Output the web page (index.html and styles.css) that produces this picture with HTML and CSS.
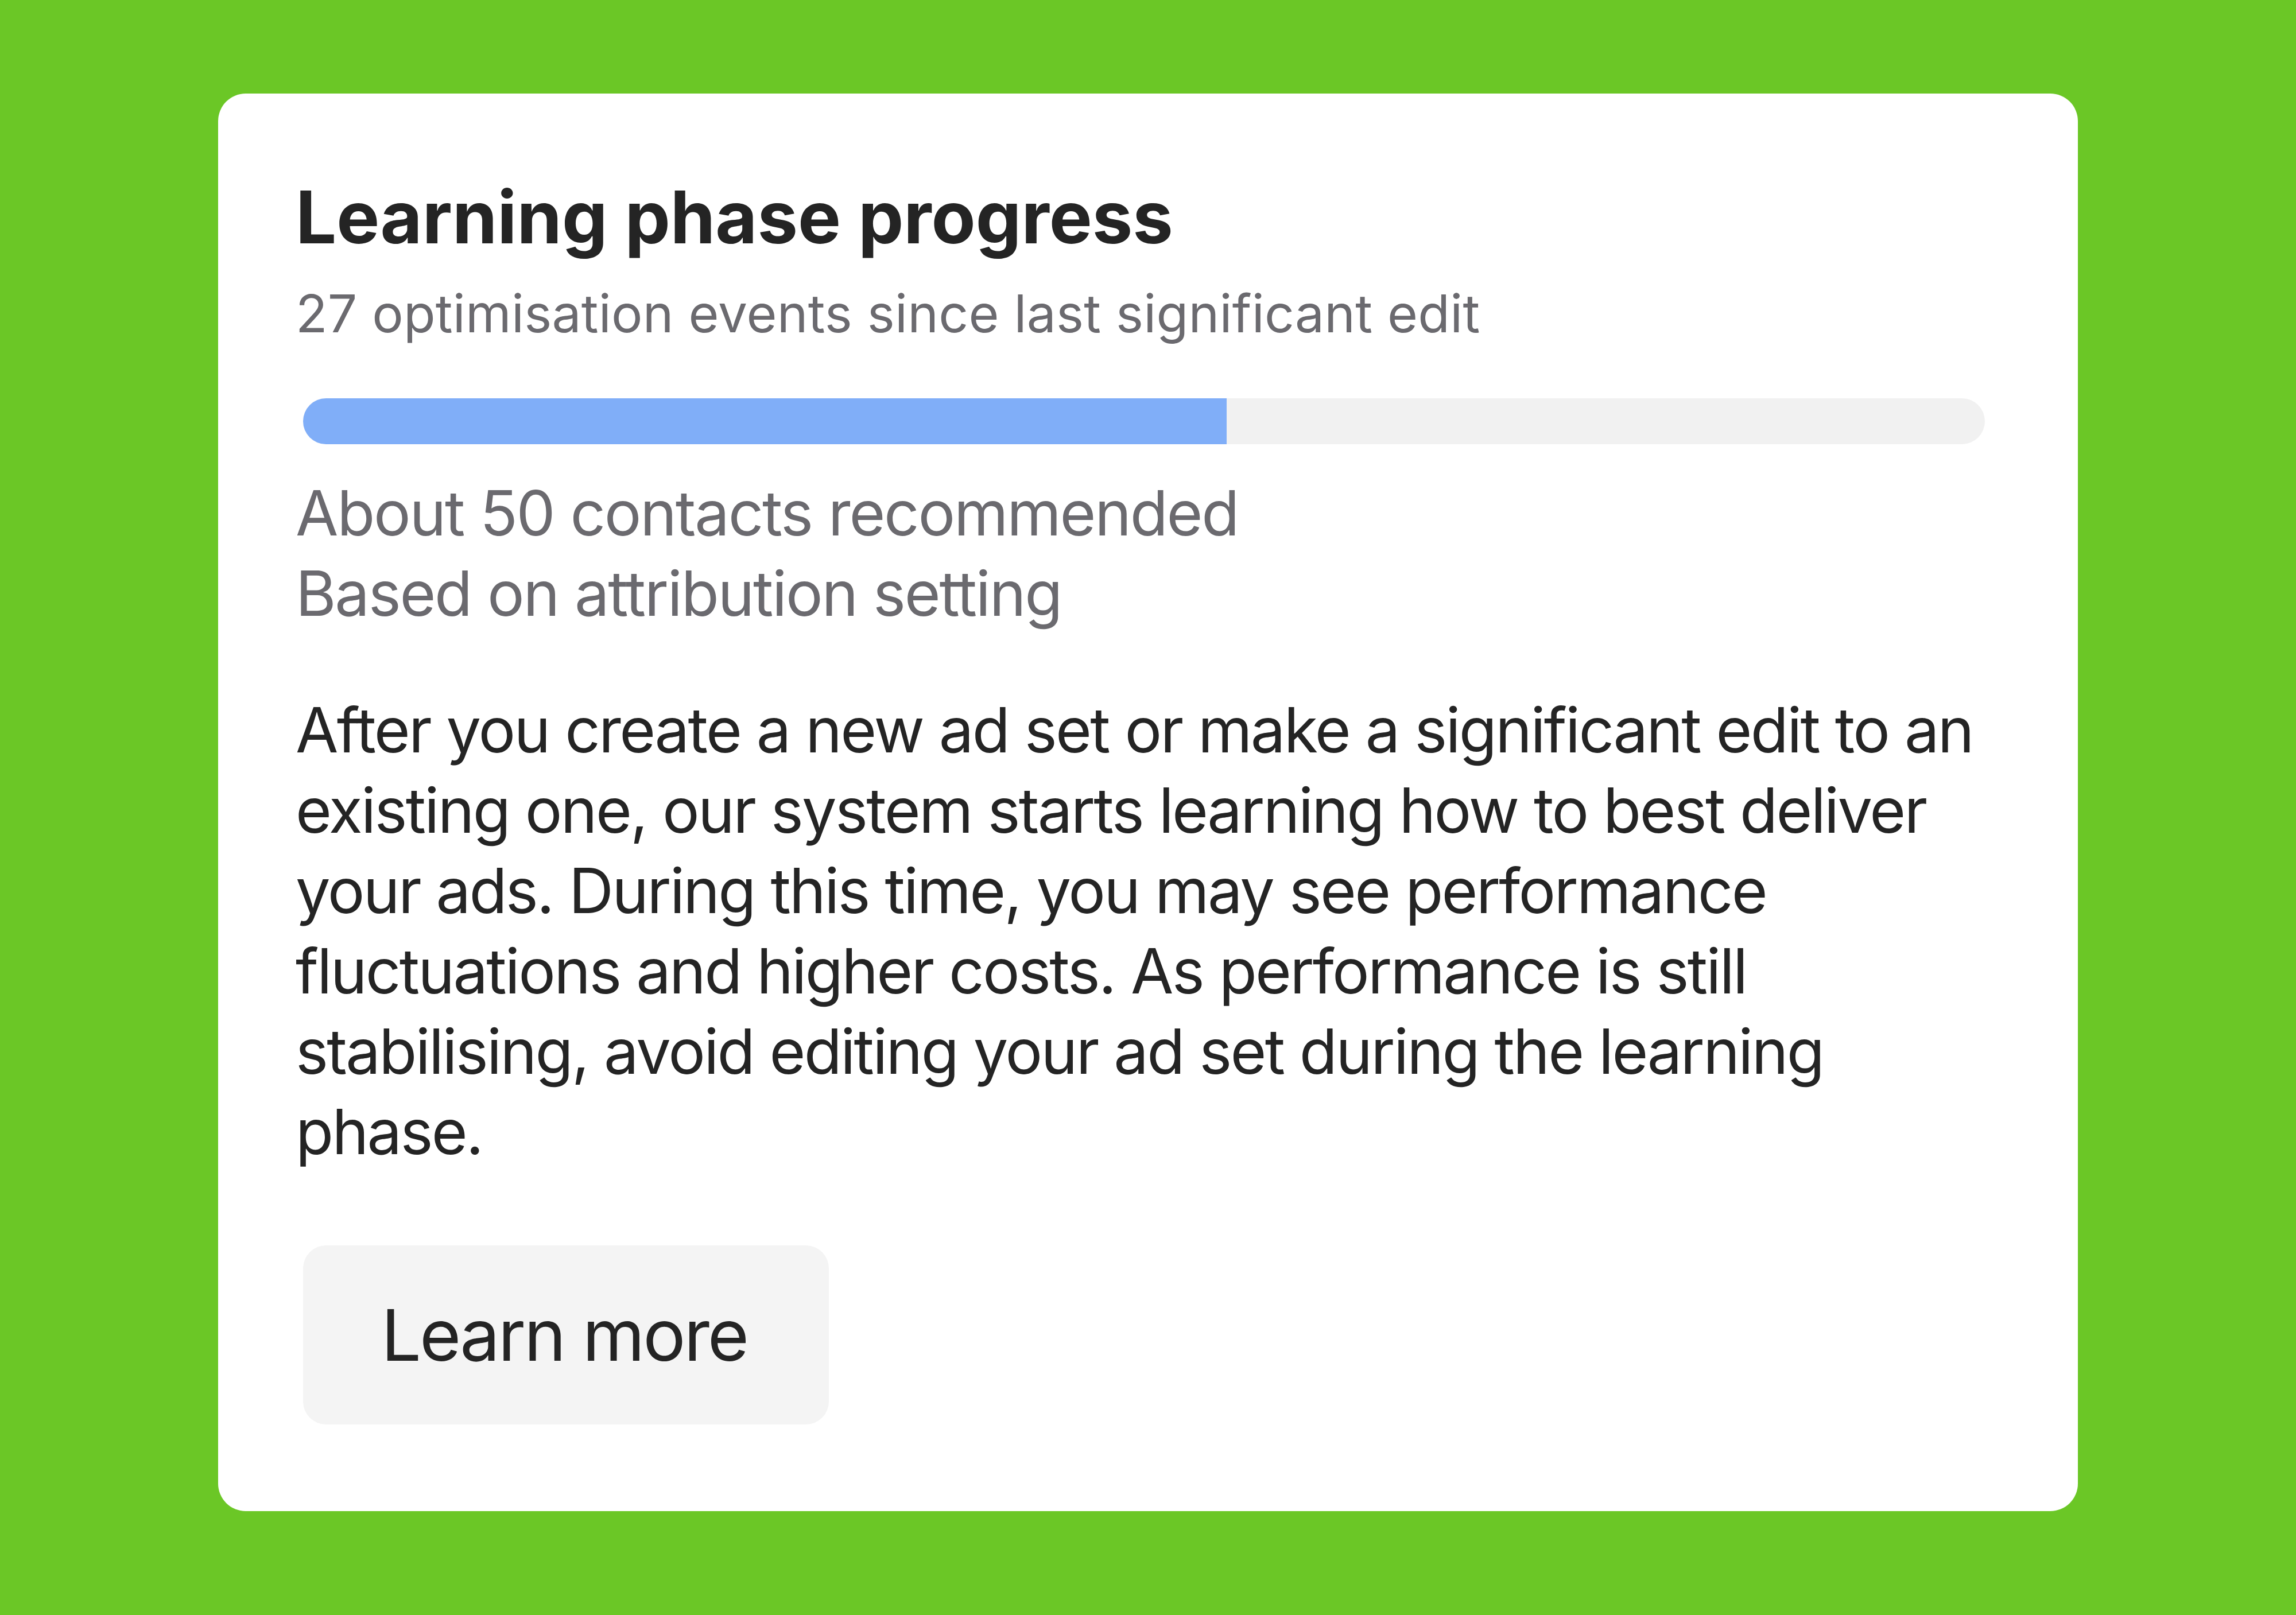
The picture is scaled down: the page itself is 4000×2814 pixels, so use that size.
FILE: index.html
```html
<!DOCTYPE html>
<html lang="en">
<head>
<meta charset="utf-8">
<title>Learning phase progress</title>
<link rel="stylesheet" href="styles.css">
</head>
<body>
<main class="card">
  <h1 class="title">Learning phase progress</h1>
  <p class="subtitle">27 optimisation events since last significant edit</p>
  <div class="bar"><div class="bar-fill" style="width: 54.9%"></div></div>
  <div class="metrics">
    <p>About 50 contacts recommended</p>
    <p>Based on attribution setting</p>
  </div>
  <p class="body-text">After you create a new ad set or make a significant edit to an existing one, our system starts learning how to best deliver your ads. During this time, you may see performance fluctuations and higher costs. As performance is still stabilising, avoid editing your ad set during the learning phase.</p>
  <button class="learn-btn" type="button">Learn more</button>
</main>
</body>
</html>
```

FILE: styles.css
```css
html, body {
  margin: 0;
  padding: 0;
}
body {
  width: 4000px;
  height: 2814px;
  background: #6bc726;
  font-family: Inter, "Noto Sans", "Liberation Sans", sans-serif;
  box-sizing: border-box;
  padding: 163px 380px 0 380px;
}
.card {
  background: #ffffff;
  border-radius: 48px;
  padding: 140px 160px 151px 135px;
  display: flex;
  flex-direction: column;
  align-items: flex-start;
}
.title {
  margin: 0;
  font-size: 126px;
  line-height: 151px;
  font-weight: 700;
  color: #242424;
}
.subtitle {
  margin: 34px 0 0;
  font-size: 91px;
  line-height: 117px;
  font-weight: 400;
  color: #6b6a6f;
  letter-spacing: 0.2px;
}
.bar {
  align-self: stretch;
  margin: 89px 2px 0 13px;
  height: 80px;
  border-radius: 40px;
  background: #f1f1f1;
  overflow: hidden;
  display: flex;
}
.bar-fill {
  height: 100%;
  background: #80aef8;
}
.metrics {
  margin-top: 50px;
  font-size: 108px;
  line-height: 140px;
  color: #6b6a6f;
  letter-spacing: -2.3px;
}
.metrics p {
  margin: 0;
}
.body-text {
  margin: 98px 0 0;
  font-size: 108px;
  line-height: 140px;
  color: #242424;
  letter-spacing: -2.75px;
}
.learn-btn {
  margin: 128px 0 0 13px;
  width: 916px;
  height: 312px;
  border: none;
  border-radius: 40px;
  background: #f4f4f4;
  font-family: Inter, "Noto Sans", "Liberation Sans", sans-serif;
  font-size: 124px;
  font-weight: 400;
  letter-spacing: -3.2px;
  color: #242424;
  padding: 0 6px 0 0;
  display: flex;
  align-items: center;
  justify-content: center;
}
```
